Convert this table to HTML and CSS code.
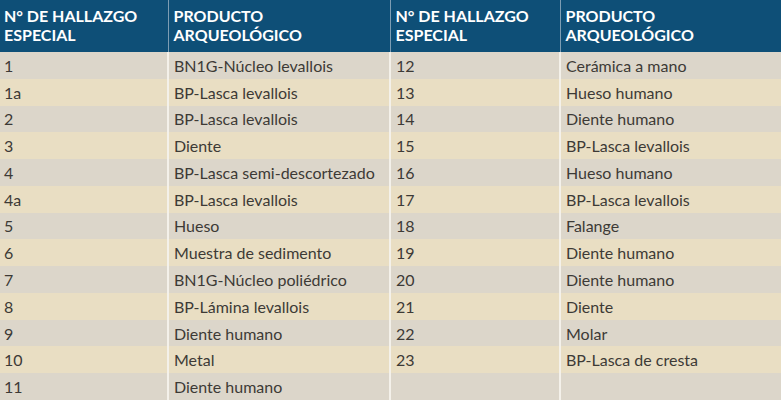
FILE: index.html
```html
<!DOCTYPE html>
<html lang="es">
<head>
<meta charset="utf-8">
<title>Hallazgos especiales</title>
<link rel="stylesheet" href="styles.css">
</head>
<body>
<table class="finds">
  <colgroup>
    <col class="c1"><col class="c2"><col class="c3"><col class="c4">
  </colgroup>
  <thead>
    <tr class="head">
      <th>N° DE HALLAZGO<br>ESPECIAL</th>
      <th>PRODUCTO<br>ARQUEOLÓGICO</th>
      <th>N° DE HALLAZGO<br>ESPECIAL</th>
      <th>PRODUCTO<br>ARQUEOLÓGICO</th>
    </tr>
  </thead>
  <tbody>
    <tr class="odd"><td>1</td><td>BN1G-Núcleo levallois</td><td>12</td><td>Cerámica a mano</td></tr>
    <tr class="even"><td>1a</td><td>BP-Lasca levallois</td><td>13</td><td>Hueso humano</td></tr>
    <tr class="odd"><td>2</td><td>BP-Lasca levallois</td><td>14</td><td>Diente humano</td></tr>
    <tr class="even"><td>3</td><td>Diente</td><td>15</td><td>BP-Lasca levallois</td></tr>
    <tr class="odd"><td>4</td><td>BP-Lasca semi-descortezado</td><td>16</td><td>Hueso humano</td></tr>
    <tr class="even"><td>4a</td><td>BP-Lasca levallois</td><td>17</td><td>BP-Lasca levallois</td></tr>
    <tr class="odd"><td>5</td><td>Hueso</td><td>18</td><td>Falange</td></tr>
    <tr class="even"><td>6</td><td>Muestra de sedimento</td><td>19</td><td>Diente humano</td></tr>
    <tr class="odd"><td>7</td><td>BN1G-Núcleo poliédrico</td><td>20</td><td>Diente humano</td></tr>
    <tr class="even"><td>8</td><td>BP-Lámina levallois</td><td>21</td><td>Diente</td></tr>
    <tr class="odd"><td>9</td><td>Diente humano</td><td>22</td><td>Molar</td></tr>
    <tr class="even"><td>10</td><td>Metal</td><td>23</td><td>BP-Lasca de cresta</td></tr>
    <tr class="odd"><td>11</td><td>Diente humano</td><td></td><td></td></tr>
  </tbody>
</table>
</body>
</html>
```
FILE: styles.css
```css
html, body {
  margin: 0;
  padding: 0;
  background: #ffffff;
}
.finds {
  border-collapse: collapse;
  table-layout: fixed;
  width: 781px;
  font-family: "Lato", "Noto Sans", sans-serif;
}
.c1 { width: 168px; }
.c2 { width: 222px; }
.c3 { width: 170px; }
.c4 { width: 221px; }
.finds th,
.finds td {
  padding: 0 0 0 5px;
  text-align: left;
  border-left: 2px solid #f4f1ea;
  white-space: nowrap;
}
.finds th:first-child,
.finds td:first-child {
  border-left: none;
  padding-left: 4px;
}
.head {
  height: 52px;
  background: #0e4f77;
}
.head th {
  color: #ffffff;
  font-weight: 700;
  font-size: 16px;
  line-height: 19px;
  vertical-align: top;
  padding-top: 6px;
  border-left-color: #7d9db3;
  border-left-width: 1px;
}
.finds td {
  height: 26.77px;
  font-size: 16px;
  font-weight: 400;
  color: #3d3a36;
  vertical-align: middle;
}
.odd { background: #dcd6ca; }
.even { background: #e9dec3; }
```
